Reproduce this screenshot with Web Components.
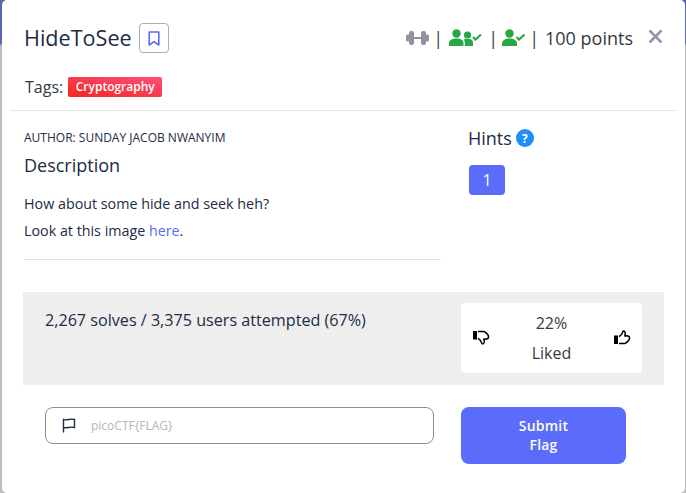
<!DOCTYPE html>
<html>
<head>
<meta charset="utf-8">
<title>HideToSee</title>
<style>
html, body { margin: 0; padding: 0; height: 100%; overflow: hidden; }
body { font-family: "Open Sans", sans-serif; color: #212b45; }
a { color: #5a6cf9; text-decoration: none; }
</style>
</head>
<body>
<challenge-backdrop>
  <challenge-modal>
    <span slot="title">HideToSee</span>
    <span slot="points">100 points</span>
    <tag-badge slot="tags">Cryptography</tag-badge>
    <span slot="author">AUTHOR: SUNDAY JACOB NWANYIM</span>
    <span slot="heading">Description</span>
    <p>How about some hide and seek heh?</p>
    <p>Look at this image <a href="#">here</a>.</p>
    <span slot="stats">2,267 solves / 3,375 users attempted (67%)</span>
    <like-card slot="likes"></like-card>
    <flag-form slot="form"></flag-form>
  </challenge-modal>
</challenge-backdrop>

<script>
"use strict";

class ChallengeBackdrop extends HTMLElement {
  constructor() {
    super();
    this.attachShadow({ mode: 'open' });
    this.shadowRoot.innerHTML = `
<style>
:host {
  display: block;
  height: 493px;
  padding: 0 1px 0 2px;
  box-sizing: border-box;
  background: linear-gradient(#5c65b2 0, #5c65b2 43px, #bdbdc2 46px);
}
</style>
<slot></slot>
`;
  }
}

class TagBadge extends HTMLElement {
  constructor() {
    super();
    this.attachShadow({ mode: 'open' });
    this.shadowRoot.innerHTML = `
<style>
:host {
  display: inline-block;
  height: 20px;
  line-height: 20px;
  padding: 0 7.5px;
  border-radius: 2px;
  font-size: 12px;
  font-weight: 600;
  color: #fff;
  background: linear-gradient(to top right, #f5261f, #ff4f7b);
}
</style>
<slot></slot>
`;
  }
}

class LikeCard extends HTMLElement {
  constructor() {
    super();
    this.attachShadow({ mode: 'open' });
    this.shadowRoot.innerHTML = `
<style>
:host {
  display: flex;
  align-items: center;
  justify-content: space-between;
  width: 181px;
  height: 70px;
  padding: 0 11px;
  box-sizing: border-box;
  background: #fff;
  border-radius: 4px;
  color: #343a40;
  font-size: 16px;
}
.mid { text-align: center; line-height: 30px; }
svg { display: block; width: 18px; height: 18px; }
</style>
<svg viewBox="0 0 18 18" style="margin-top:-2px"><rect x="1" y="3" width="4" height="8.5" fill="#000"/><path d="M6 3.6 H11.5 C13 3.6 16.6 6.5 16.6 9 C16.6 10.6 15.2 11.2 13.2 11.2 L11.8 11 C12.4 12.6 12.6 15.6 10.8 16 C9.2 16.2 9.6 13.8 8.2 12.2 C7.4 11.4 6.6 10.8 6 10.4" fill="none" stroke="#000" stroke-width="1.5" stroke-linejoin="round"/></svg>
<div class="mid"><div>22%</div><div>Liked</div></div>
<svg viewBox="0 0 18 18" style="margin-top:-2px"><rect x="1" y="7.5" width="4" height="8.5" fill="#000"/><path d="M6 15.4 H11.5 C13 15.4 16.6 12.5 16.6 10 C16.6 8.4 15.2 7.8 13.2 7.8 L11.8 8 C12.4 6.4 12.6 3.4 10.8 3 C9.2 2.8 9.6 5.2 8.2 6.8 C7.4 7.6 6.6 8.2 6 8.6" fill="none" stroke="#000" stroke-width="1.5" stroke-linejoin="round"/></svg>
`;
  }
}

class FlagForm extends HTMLElement {
  constructor() {
    super();
    this.attachShadow({ mode: 'open' });
    this.shadowRoot.innerHTML = `
<style>
:host {
  display: flex;
  align-items: flex-start;
  gap: 27px;
}
.field {
  display: flex;
  align-items: center;
  width: 389px;
  height: 37px;
  box-sizing: border-box;
  border: 1px solid #8b8f99;
  border-radius: 8px;
  padding-left: 15px;
}
svg { width: 15px; height: 15px; display: block; flex: none; }
input {
  flex: 1;
  min-width: 0;
  border: 0;
  outline: 0;
  padding: 0 0 0 15px;
  background: none;
  font: 12px "Open Sans", sans-serif;
}
input::placeholder { color: #b3b6bd; opacity: 1; }
button {
  width: 165px;
  height: 57px;
  border: 0;
  border-radius: 8px;
  background: #5a6cf9;
  color: #fff;
  font: 600 14px/19px "Open Sans", sans-serif;
  letter-spacing: .2px;
  padding: 0 50px 2px;
}
</style>
<div class="field">
  <svg viewBox="0 0 15 15"><path d="M2.5 14.5 V1.5 C5 3 10 0 13.5 1.5 V9.5 C10 8.2 5 10.5 2.5 9.5" fill="none" stroke="#212b45" stroke-width="1.4"/></svg>
  <input type="text" placeholder="picoCTF{FLAG}">
</div>
<button type="button">Submit Flag</button>
`;
  }
}

class ChallengeModal extends HTMLElement {
  constructor() {
    super();
    this.attachShadow({ mode: 'open' });
    this.shadowRoot.innerHTML = `
<style>
:host {
  display: block;
  height: 493px;
  box-sizing: border-box;
  background: #fff;
  border-radius: 5px;
}
header {
  margin: 0 8px;
  padding: 0 14px;
  box-sizing: border-box;
  border-bottom: 1px solid #e5e6e8;
  height: 111px;
}
.top {
  display: flex;
  align-items: center;
  height: 74px;
  padding-top: 2px;
  box-sizing: border-box;
}
.title { font-size: 21.6px; line-height: 32px; color: #212b45; }
.bookmark {
  display: flex;
  align-items: center;
  justify-content: center;
  width: 30px;
  height: 30px;
  box-sizing: border-box;
  margin-left: 7px;
  border: 1px solid #a9adb8;
  border-radius: 4px;
}
.meta {
  display: flex;
  align-items: center;
  gap: 6px;
  margin-left: auto;
  font-size: 18px;
  color: #343a40;
}
.meta .first { margin-right: -2px; }
.meta .third { margin: 0 -2px 0 -2px; }
.close { margin-left: 15px; margin-top: -4px; display: block; }
.tags {
  display: flex;
  align-items: center;
  gap: 5px;
  padding: 2px 0 0 1px;
  font-size: 16px;
  color: #343a40;
}
main {
  display: flex;
  padding: 19px 21px 0 22px;
  height: 181px;
  box-sizing: border-box;
}
.left {
  width: 417px;
  height: 130px;
  border-bottom: 1px solid #e0e1e4;
  box-sizing: border-box;
}
.author { font-size: 12px; line-height: 16px; color: #212b45; }
.heading { font-size: 18px; line-height: 25px; margin: 7px 0 16px; color: #212b45; }
.text { font-size: 14.3px; color: #212b45; }
.text ::slotted(p) { margin: 0 0 8px; line-height: 19px; }
.right { padding: 0 0 0 27px; margin-top: -4px; }
.hints {
  display: flex;
  align-items: center;
  gap: 4px;
  font-size: 18px;
  line-height: 25px;
  color: #212b45;
}
.q {
  display: flex;
  align-items: center;
  justify-content: center;
  width: 18px;
  height: 18px;
  margin-top: -1px;
  border-radius: 50%;
  background: #1f8ffb;
  color: #fff;
  font-size: 12px;
  font-weight: 700;
}
.hint-btn {
  display: block;
  width: 36px;
  height: 30px;
  margin: 14px 0 0 1px;
  border: 0;
  padding: 0;
  border-radius: 4px;
  background: #5a6cf9;
  color: #fff;
  font: 16px "Open Sans", sans-serif;
}
.panel {
  display: flex;
  justify-content: space-between;
  height: 93px;
  margin: 0 21px;
  padding: 11px 22px 0;
  box-sizing: border-box;
  background: #eee;
  font-size: 16.15px;
  color: #212b45;
}
.stats { padding-top: 6px; line-height: 22px; }
.form { padding: 22px 0 0 43px; }
</style>
<header>
  <div class="top">
    <span class="title"><slot name="title"></slot></span>
    <span class="bookmark">
      <svg width="12" height="15" viewBox="0 0 12 15"><path d="M1.2 1 H10.8 V14 L6 10.6 L1.2 14 Z" fill="none" stroke="#5a6cf9" stroke-width="1.6" stroke-linejoin="round"/></svg>
    </span>
    <div class="meta">
      <svg class="first" width="23" height="16" viewBox="0 0 23 16"><g fill="#8f939f"><rect x="0" y="4.5" width="4" height="7" rx="1.5"/><rect x="3" y="1" width="5" height="14" rx="2"/><rect x="8" y="7" width="7" height="2"/><rect x="15" y="1" width="5" height="14" rx="2"/><rect x="19" y="4.5" width="4" height="7" rx="1.5"/></g></svg>
      <span>|</span>
      <svg width="33" height="18" viewBox="0 0 33 18"><g fill="#28a745"><circle cx="7.5" cy="4.5" r="4.2"/><path d="M0 17 V14 C0 11 3 9.5 7.5 9.5 C12 9.5 14.5 11 14.5 14 V17 Z"/><circle cx="18.5" cy="6" r="3.6"/><path d="M15.8 17 V13.5 C15.8 12 15 11 14.5 10.6 C15.5 10 17 9.8 18.5 9.8 C22 9.8 24 11 24 13.5 V17 Z"/></g><path d="M24 8 L26.5 10.5 L32 5.5" fill="none" stroke="#28a745" stroke-width="2"/></svg>
      <span>|</span>
      <svg class="third" width="23" height="18" viewBox="0 0 23 18"><g fill="#28a745"><circle cx="7.5" cy="4.5" r="4.2"/><path d="M0 17 V15 C0 11.5 3 9.5 7.5 9.5 C12 9.5 15 11.5 15 15 V17 Z"/></g><path d="M14.5 8 L17 10.5 L22.5 5.5" fill="none" stroke="#28a745" stroke-width="2"/></svg>
      <span>|</span>
      <span><slot name="points"></slot></span>
    </div>
    <svg class="close" width="15" height="15" viewBox="0 0 15 15"><path d="M1.5 1.5 L13.5 13.5 M13.5 1.5 L1.5 13.5" stroke="#8f96ad" stroke-width="2.6"/></svg>
  </div>
  <div class="tags">Tags: <slot name="tags"></slot></div>
</header>
<main>
  <div class="left">
    <div class="author"><slot name="author"></slot></div>
    <div class="heading"><slot name="heading"></slot></div>
    <div class="text"><slot></slot></div>
  </div>
  <div class="right">
    <div class="hints">Hints <span class="q">?</span></div>
    <button class="hint-btn" type="button">1</button>
  </div>
</main>
<div class="panel">
  <div class="stats"><slot name="stats"></slot></div>
  <div class="likes"><slot name="likes"></slot></div>
</div>
<div class="form"><slot name="form"></slot></div>
`;
  }
}

customElements.define('challenge-backdrop', ChallengeBackdrop);
customElements.define('tag-badge', TagBadge);
customElements.define('like-card', LikeCard);
customElements.define('flag-form', FlagForm);
customElements.define('challenge-modal', ChallengeModal);
</script>
</body>
</html>
